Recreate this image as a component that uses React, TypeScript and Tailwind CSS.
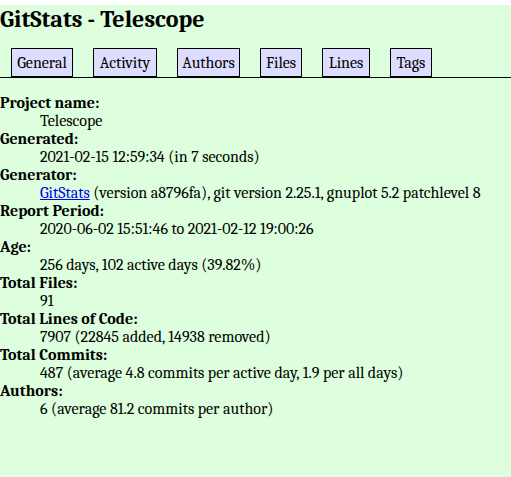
const tabs = [
    { label: 'General', w: 'w-[62px]' },
    { label: 'Activity', w: 'w-[64px]' },
    { label: 'Authors', w: 'w-[63px]' },
    { label: 'Files', w: 'w-[42px]' },
    { label: 'Lines', w: 'w-[48px]' },
    { label: 'Tags', w: 'w-[42px]' },
];

const info: { term: string; value: React.ReactNode }[] = [
    { term: 'Project name:', value: 'Telescope' },
    { term: 'Generated:', value: '2021-02-15 12:59:34 (in 7 seconds)' },
    {
        term: 'Generator:',
        value: (
            <>
                <a href="#" className="text-[#0000ee] underline">
                    GitStats
                </a>{' '}
                (version a8796fa), git version 2.25.1, gnuplot 5.2 patchlevel 8
            </>
        ),
    },
    { term: 'Report Period:', value: '2020-06-02 15:51:46 to 2021-02-12 19:00:26' },
    { term: 'Age:', value: '256 days, 102 active days (39.82%)' },
    { term: 'Total Files:', value: '91' },
    { term: 'Total Lines of Code:', value: '7907 (22845 added, 14938 removed)' },
    {
        term: 'Total Commits:',
        value: '487 (average 4.8 commits per active day, 1.9 per all days)',
    },
    { term: 'Authors:', value: '6 (average 81.2 commits per author)' },
];

export default function App() {
    return (
        <div className="min-h-[477px] w-[511px] bg-[#ddffdd] font-serif [font-family:Liberation_Serif,Times_New_Roman,serif] text-black">
            <h1 className="mt-[5px] text-[24px] leading-[28px] font-bold">
                GitStats - Telescope
            </h1>

            {/* Navigation */}
            <div className="flex h-[45px] items-end gap-[20px] border-b border-black pl-[11px]">
                {tabs.map((t) => (
                    <a
                        key={t.label}
                        href="#"
                        className={`flex h-[29px] ${t.w} items-center justify-center border border-black bg-[#ddddff] text-[16px] leading-[18px]`}
                    >
                        {t.label}
                    </a>
                ))}
            </div>

            <dl className="mt-4 text-[16px] leading-[18px]">
                {info.map((row) => (
                    <div key={row.term}>
                        <dt className="font-bold">{row.term}</dt>
                        <dd className="ml-10">{row.value}</dd>
                    </div>
                ))}
            </dl>
        </div>
    );
}
